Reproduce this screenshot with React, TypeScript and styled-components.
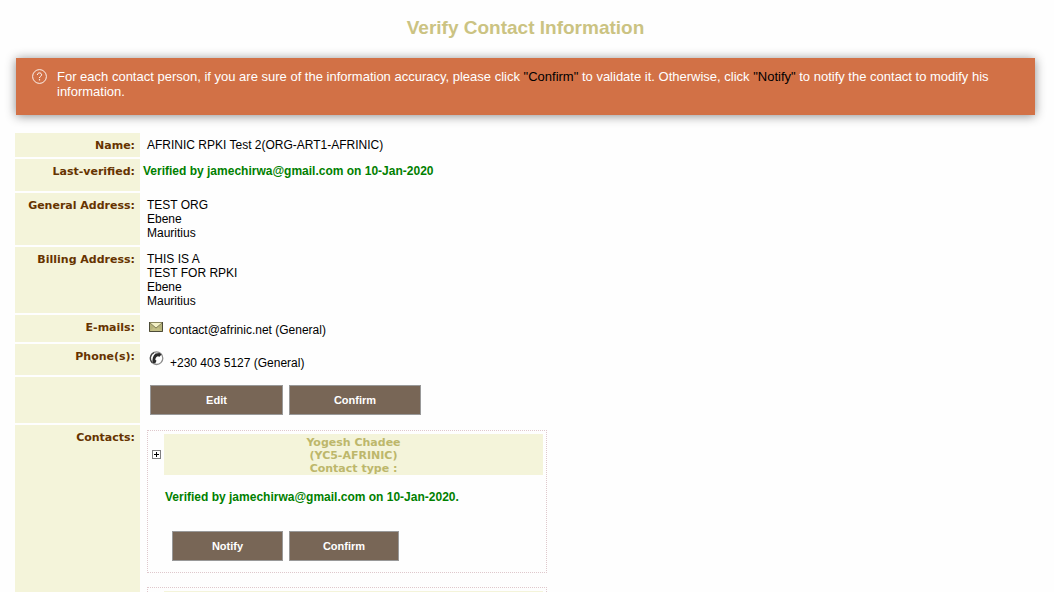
import React from "react";
import styled, { createGlobalStyle } from "styled-components";

const GlobalStyle = createGlobalStyle`
  *, *::before, *::after { box-sizing: border-box; }
  body {
    margin: 0;
    background: #fefefe;
    color: #000;
    font-family: "Liberation Sans", Arial, sans-serif;
    font-size: 12px;
    line-height: 14px;
  }
`;

const Page = styled.main`
  height: 100vh;
  overflow: hidden;
  padding: 16px 19px 0 13px;
`;

const Title = styled.h1`
  margin: 0 0 19px 3px;
  font-size: 19px;
  line-height: 23px;
  text-align: center;
  color: #cbc382;
`;

const Banner = styled.section`
  display: flex;
  gap: 10px;
  margin: 0 0 16px 3px;
  padding: 11px 16px 16px;
  background: #d27146;
  box-shadow: 0 1px 10px rgba(0, 0, 0, 0.45);
  color: #fff;
  font-size: 13px;
  line-height: 15px;

  svg { flex: none; }
  p { margin: 0; }
`;

const Keyword = styled.span`
  color: #000;
`;

const Details = styled.table`
  width: 100%;
  border-collapse: separate;
  border-spacing: 2px;
`;

const Label = styled.th`
  width: 125px;
  padding: 6px 5px 4px;
  background: #f4f4da;
  color: #663300;
  font-family: "DejaVu Sans", Verdana, sans-serif;
  font-size: 11px;
  font-weight: bold;
  text-align: right;
  vertical-align: top;
  white-space: nowrap;
`;

const Value = styled.td<{ $pad?: string }>`
  padding: ${(p) => p.$pad ?? "5px"};
  vertical-align: top;
`;

const Verified = styled.p`
  margin: 0;
  color: #008000;
  font-weight: bold;
`;

const IconLine = styled.div`
  display: flex;
  align-items: flex-start;
  gap: 6px;
`;

const LineText = styled.span<{ $drop: number }>`
  padding-top: ${(p) => p.$drop}px;
`;

const Actions = styled.div`
  display: flex;
  gap: 6px;
`;

const Button = styled.button<{ $width: number }>`
  width: ${(p) => p.$width}px;
  height: 30px;
  padding: 0;
  border: 1px solid #999;
  border-radius: 0;
  background: #786656;
  color: #fff;
  font-family: inherit;
  font-size: 11px;
  font-weight: bold;
  cursor: pointer;
`;

const Card = styled.article`
  width: 400px;
  max-width: 100%;
  min-height: 143px;
  margin-bottom: 14px;
  padding: 3px;
  border: 1px dotted #dfc8cc;
`;

const CardTop = styled.header`
  display: grid;
  grid-template-columns: 9px 1fr;
  align-items: center;
  gap: 3px;
  padding-left: 1px;
`;

const Expand = styled.button`
  display: block;
  width: 9px;
  height: 9px;
  padding: 0;
  border: 0;
  background: none;
  cursor: pointer;

  svg { display: block; }
`;

const CardTitle = styled.h2`
  min-height: 41px;
  margin: 0;
  padding: 2px 1px 0;
  background: #f4f4da;
  color: #bdb76b;
  font-family: "DejaVu Sans", Verdana, sans-serif;
  font-size: 11px;
  line-height: 13px;
  text-align: center;
`;

const CardBody = styled.div`
  display: grid;
  gap: 27px;
  padding: 15px 0 8px 14px;

  ${Actions} { padding-left: 7px; }
`;

const QuestionIcon = () => (
  <svg width="15" height="15" viewBox="0 0 15 15" fill="none" stroke="#fff" aria-hidden="true">
    <circle cx="7.5" cy="7.5" r="6.9" strokeWidth="0.9" />
    <path d="M5.4 6c0-1.300.9-2.100 2.100-2.100s2.100.8 2.100 1.900c0 1.500-2.100 1.600-2.100 3.200" />
    <path d="M7.5 10.200v1.200" strokeWidth="1.2" />
  </svg>
);

const MailIcon = () => (
  <svg width="14" height="10" viewBox="0 0 14 10" aria-hidden="true">
    <rect width="14" height="10" fill="#b5b27a" />
    <path d="M1 1h12L7 6z" fill="#f3f0c6" />
    <path d="M1 9l4-4 2 2 2-2 4 4z" fill="#c3bf84" />
    <path d="M1 1l6 5 6-5" fill="none" stroke="#85825a" />
    <path d="M0 .5h14" stroke="#8b8860" />
    <path d="M.5 0v9.500h13V0" fill="none" stroke="#4c4b38" />
  </svg>
);

const PhoneIcon = () => (
  <svg width="15" height="15" viewBox="0 0 15 15" aria-hidden="true">
    <circle cx="7.5" cy="7.2" r="6.3" fill="#fff" stroke="#8c8c8c" strokeWidth="1.3" />
    <path d="M3.2 11.7A6.3 6.3 0 0 1 5 1.500" fill="none" stroke="#444" strokeWidth="1.3" />
    <path
      d="M6.500 2.500L10.500 2l2 1.600-2 2.200-1.700-.6C7.300 5.700 6.500 7 6.300 8.800l1.200 1-1.300 2.600-2.700-.3C3 8.300 4 4.500 6.500 2.500z"
      fill="#2a2a2a"
    />
  </svg>
);

const PlusIcon = () => (
  <svg width="9" height="9" viewBox="0 0 9 9" aria-hidden="true">
    <rect x=".5" y=".5" width="8" height="8" fill="#fff" stroke="#808080" />
    <path d="M2 4.500h5M4.500 2v5" stroke="#000" />
  </svg>
);

const Lines = ({ items }: { items: string[] }) => (
  <>
    {items.map((item) => (
      <div key={item}>{item}</div>
    ))}
  </>
);

export default function App() {
  return (
    <>
      <GlobalStyle />
      <Page>
        <Title>Verify Contact Information</Title>
        <Banner>
          <QuestionIcon />
          <p>
            For each contact person, if you are sure of the information accuracy, please click{" "}
            <Keyword>"Confirm"</Keyword> to validate it. Otherwise, click <Keyword>"Notify"</Keyword> to
            notify the contact to modify his information.
          </p>
        </Banner>
        <Details>
          <tbody>
            <tr>
              <Label scope="row">Name:</Label>
              <Value>AFRINIC RPKI Test 2(ORG-ART1-AFRINIC)</Value>
            </tr>
            <tr>
              <Label scope="row">Last-verified:</Label>
              <Value $pad="5px 1px 13px">
                <Verified>Verified by jamechirwa@gmail.com on 10-Jan-2020</Verified>
              </Value>
            </tr>
            <tr>
              <Label scope="row">General Address:</Label>
              <Value>
                <Lines items={["TEST ORG", "Ebene", "Mauritius"]} />
              </Value>
            </tr>
            <tr>
              <Label scope="row">Billing Address:</Label>
              <Value>
                <Lines items={["THIS IS A", "TEST FOR RPKI", "Ebene", "Mauritius"]} />
              </Value>
            </tr>
            <tr>
              <Label scope="row">E-mails:</Label>
              <Value $pad="7px 7px 5px">
                <IconLine>
                  <MailIcon />
                  <LineText $drop={1}>contact@afrinic.net (General)</LineText>
                </IconLine>
              </Value>
            </tr>
            <tr>
              <Label scope="row">Phone(s):</Label>
              <Value $pad="7px 7px 5px">
                <IconLine>
                  <PhoneIcon />
                  <LineText $drop={5}>+230 403 5127 (General)</LineText>
                </IconLine>
              </Value>
            </tr>
            <tr>
              <Label />
              <Value $pad="8px">
                <Actions>
                  <Button type="button" $width={133}>Edit</Button>
                  <Button type="button" $width={132}>Confirm</Button>
                </Actions>
              </Value>
            </tr>
            <tr>
              <Label scope="row">Contacts:</Label>
              <Value>
                <Card>
                  <CardTop>
                    <Expand type="button" aria-label="Expand">
                      <PlusIcon />
                    </Expand>
                    <CardTitle>
                      <Lines items={["Yogesh Chadee", "(YC5-AFRINIC)", "Contact type :"]} />
                    </CardTitle>
                  </CardTop>
                  <CardBody>
                    <Verified>Verified by jamechirwa@gmail.com on 10-Jan-2020.</Verified>
                    <Actions>
                      <Button type="button" $width={111}>Notify</Button>
                      <Button type="button" $width={110}>Confirm</Button>
                    </Actions>
                  </CardBody>
                </Card>
                <Card>
                  <CardTop>
                    <Expand type="button" aria-label="Expand">
                      <PlusIcon />
                    </Expand>
                    <CardTitle />
                  </CardTop>
                </Card>
              </Value>
            </tr>
          </tbody>
        </Details>
      </Page>
    </>
  );
}
